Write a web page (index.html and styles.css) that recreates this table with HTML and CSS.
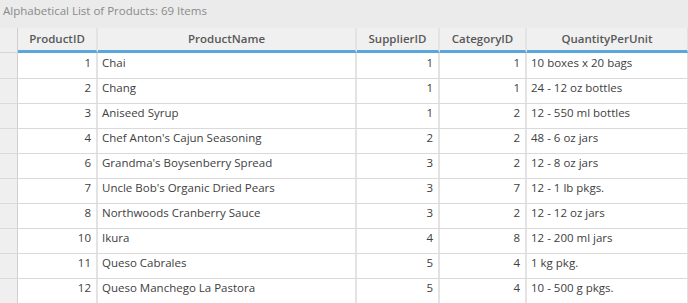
FILE: index.html
```html
<!DOCTYPE html>
<html>
<head>
<meta charset="utf-8">
<link rel="stylesheet" href="styles.css">
</head>
<body>
<div class="title">Alphabetical List of Products: 69 Items</div>
<div class="grid">
  <div class="row head">
    <div class="rh"></div>
    <div class="hc">ProductID</div>
    <div class="hc">ProductName</div>
    <div class="hc">SupplierID</div>
    <div class="hc">CategoryID</div>
    <div class="hc last">QuantityPerUnit</div>
  </div>
  <div class="row first">
    <div class="rh"></div><div class="c num">1</div><div class="c">Chai</div><div class="c num">1</div><div class="c num">1</div><div class="c last">10 boxes x 20 bags</div>
  </div>
  <div class="row">
    <div class="rh"></div><div class="c num">2</div><div class="c">Chang</div><div class="c num">1</div><div class="c num">1</div><div class="c last">24 - 12 oz bottles</div>
  </div>
  <div class="row">
    <div class="rh"></div><div class="c num">3</div><div class="c">Aniseed Syrup</div><div class="c num">1</div><div class="c num">2</div><div class="c last">12 - 550 ml bottles</div>
  </div>
  <div class="row">
    <div class="rh"></div><div class="c num">4</div><div class="c">Chef Anton's Cajun Seasoning</div><div class="c num">2</div><div class="c num">2</div><div class="c last">48 - 6 oz jars</div>
  </div>
  <div class="row">
    <div class="rh"></div><div class="c num">6</div><div class="c">Grandma's Boysenberry Spread</div><div class="c num">3</div><div class="c num">2</div><div class="c last">12 - 8 oz jars</div>
  </div>
  <div class="row">
    <div class="rh"></div><div class="c num">7</div><div class="c">Uncle Bob's Organic Dried Pears</div><div class="c num">3</div><div class="c num">7</div><div class="c last">12 - 1 lb pkgs.</div>
  </div>
  <div class="row">
    <div class="rh"></div><div class="c num">8</div><div class="c">Northwoods Cranberry Sauce</div><div class="c num">3</div><div class="c num">2</div><div class="c last">12 - 12 oz jars</div>
  </div>
  <div class="row">
    <div class="rh"></div><div class="c num">10</div><div class="c">Ikura</div><div class="c num">4</div><div class="c num">8</div><div class="c last">12 - 200 ml jars</div>
  </div>
  <div class="row">
    <div class="rh"></div><div class="c num">11</div><div class="c">Queso Cabrales</div><div class="c num">5</div><div class="c num">4</div><div class="c last">1 kg pkg.</div>
  </div>
  <div class="row">
    <div class="rh"></div><div class="c num">12</div><div class="c">Queso Manchego La Pastora</div><div class="c num">5</div><div class="c num">4</div><div class="c last">10 - 500 g pkgs.</div>
  </div>
</div>
</body>
</html>
```

FILE: styles.css
```css
* {
  box-sizing: border-box;
}
html, body {
  margin: 0;
  padding: 0;
  background: #ebebeb;
  font-family: "Open Sans", "Noto Sans", sans-serif;
  font-size: 11.5px;
  overflow: hidden;
}
.title {
  height: 28px;
  line-height: 21px;
  padding-left: 3px;
  color: #8a8a8a;
}
.grid {
  display: flex;
  flex-direction: column;
  background: #fff;
}
.row {
  display: grid;
  grid-template-columns: 18px 80px 259px 83px 87px 161px;
  height: 25px;
  border-bottom: 1px solid #dadada;
}
.row.first {
  height: 26px;
}
.row.head {
  height: 25px;
  border-bottom: none;
  background: #f0f0f0;
}
.row.head .hc {
  border-bottom: 3px solid #5aa7dc;
}
.row.head .rh {
  border-bottom: 1px solid #d6d6d6;
}
.rh {
  background: #efefef;
  border-right: 1px solid #cfcfcf;
}
.hc {
  font-weight: 600;
  color: #585858;
  text-align: center;
  line-height: 22px;
  border-right: 2px solid #e3e3e3;
  white-space: nowrap;
}
.c {
  color: #404040;
  line-height: 18px;
  padding: 0 4px;
  border-right: 2px solid #e3e3e3;
  white-space: nowrap;
  overflow: hidden;
}
.row.first .c {
  line-height: 19px;
}
.c.num {
  text-align: right;
  padding-right: 5px;
}
.last {
  border-right: 1px solid #e0e0e0;
}
```
